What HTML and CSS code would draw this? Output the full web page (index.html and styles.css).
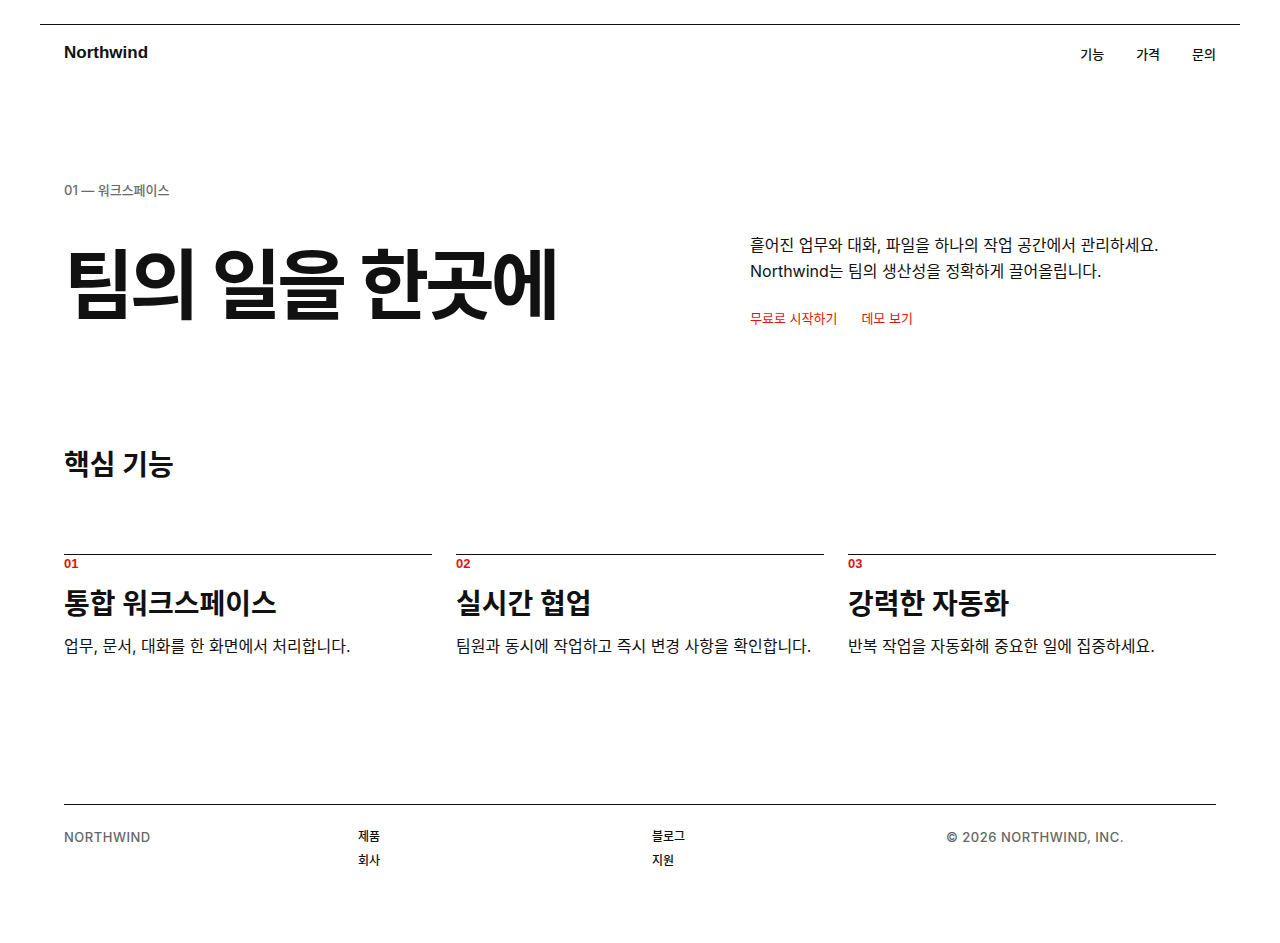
FILE: index.html
```html
<!DOCTYPE html>
<html lang="ko">
<head>
<meta charset="utf-8">
<title>Northwind</title>
<link rel="stylesheet" href="styles.css">
</head>
<body>
<div class="page">
  <header class="site-header">
    <div class="logo">Northwind</div>
    <nav class="nav">
      <a href="#">기능</a>
      <a href="#">가격</a>
      <a href="#">문의</a>
    </nav>
  </header>

  <section class="hero">
    <div class="eyebrow">01 — 워크스페이스</div>
    <div class="hero-grid">
      <h1 class="hero-title">팀의 일을 한곳에</h1>
      <div class="hero-side">
        <p class="hero-lead">흩어진 업무와 대화, 파일을 하나의 작업 공간에서 관리하세요.<br>Northwind는 팀의 생산성을 정확하게 끌어올립니다.</p>
        <div class="hero-links">
          <a href="#">무료로 시작하기</a>
          <a href="#">데모 보기</a>
        </div>
      </div>
    </div>
  </section>

  <section class="features">
    <h2 class="section-title">핵심 기능</h2>
    <div class="feature-grid">
      <article class="feature">
        <div class="feature-num">01</div>
        <h3 class="feature-title">통합 워크스페이스</h3>
        <p class="feature-desc">업무, 문서, 대화를 한 화면에서 처리합니다.</p>
      </article>
      <article class="feature">
        <div class="feature-num">02</div>
        <h3 class="feature-title">실시간 협업</h3>
        <p class="feature-desc">팀원과 동시에 작업하고 즉시 변경 사항을 확인합니다.</p>
      </article>
      <article class="feature">
        <div class="feature-num">03</div>
        <h3 class="feature-title">강력한 자동화</h3>
        <p class="feature-desc">반복 작업을 자동화해 중요한 일에 집중하세요.</p>
      </article>
    </div>
  </section>

  <footer class="site-footer">
    <div class="footer-brand">NORTHWIND</div>
    <div class="footer-col">
      <a href="#">제품</a>
      <a href="#">회사</a>
    </div>
    <div class="footer-col">
      <a href="#">블로그</a>
      <a href="#">지원</a>
    </div>
    <div class="footer-copy">© 2026 NORTHWIND, INC.</div>
  </footer>
</div>
</body>
</html>
```

FILE: styles.css
```css
* { box-sizing: border-box; }

html, body {
  margin: 0;
  padding: 0;
  background: #ffffff;
}

body {
  font-family: "Inter", "Noto Sans CJK KR", sans-serif;
  color: #111111;
}

a {
  color: inherit;
  text-decoration: none;
}

.page {
  margin: 24px 40px 0;
  border-top: 1px solid #111111;
  padding: 0 24px 60px;
}

/* Header */
.site-header {
  display: flex;
  justify-content: space-between;
  align-items: center;
  height: 56px;
}

.logo {
  font-family: "Liberation Sans", "Noto Sans CJK KR", sans-serif;
  font-weight: 700;
  font-size: 17px;
}

.nav {
  display: flex;
  gap: 32px;
}

.nav a {
  font-size: 13px;
  font-weight: 500;
}

/* Hero */
.hero {
  padding-top: 99px;
}

.eyebrow {
  font-size: 13px;
  font-weight: 500;
  color: #6b6b6b;
  line-height: 20px;
}

.hero-grid {
  display: grid;
  grid-template-columns: 1fr 466px;
  gap: 48px;
  align-items: end;
  margin-top: 32px;
}

.hero-title {
  margin: 0;
  font-size: 76px;
  font-weight: 700;
  letter-spacing: -0.055em;
  word-spacing: 0.03em;
  line-height: 1.1;
}

.hero-lead {
  margin: 0;
  font-size: 16px;
  line-height: 26px;
  color: #111111;
}

.hero-links {
  display: flex;
  gap: 24px;
  margin-top: 25px;
  padding-bottom: 1px;
}

.hero-links a {
  font-size: 13px;
  font-weight: 400;
  line-height: 18px;
  color: #e3120b;
}

/* Features */
.features {
  padding-top: 117px;
}

.section-title {
  margin: 0;
  font-size: 28px;
  font-weight: 700;
  line-height: 40px;
}

.feature-grid {
  display: grid;
  grid-template-columns: repeat(3, 1fr);
  gap: 24px;
  margin-top: 69px;
}

.feature {
  border-top: 1px solid #111111;
}

.feature-num {
  font-family: "Liberation Sans", sans-serif;
  font-weight: 700;
  font-size: 13px;
  color: #e3120b;
  line-height: 18px;
}

.feature-title {
  margin: 13px 0 0;
  font-size: 28px;
  font-weight: 700;
  line-height: 36px;
}

.feature-desc {
  margin: 11px 0 0;
  font-size: 16px;
  line-height: 26px;
}

/* Footer */
.site-footer {
  display: grid;
  grid-template-columns: repeat(4, 1fr);
  gap: 24px;
  margin-top: 145px;
  border-top: 1px solid #111111;
  padding-top: 23px;
}

.footer-brand,
.footer-copy {
  font-size: 13px;
  font-weight: 500;
  color: #666666;
  letter-spacing: 0.5px;
  line-height: 18px;
}

.footer-col {
  display: flex;
  flex-direction: column;
  gap: 6px;
}

.footer-col a {
  font-size: 12px;
  font-weight: 500;
  line-height: 18px;
}
```
